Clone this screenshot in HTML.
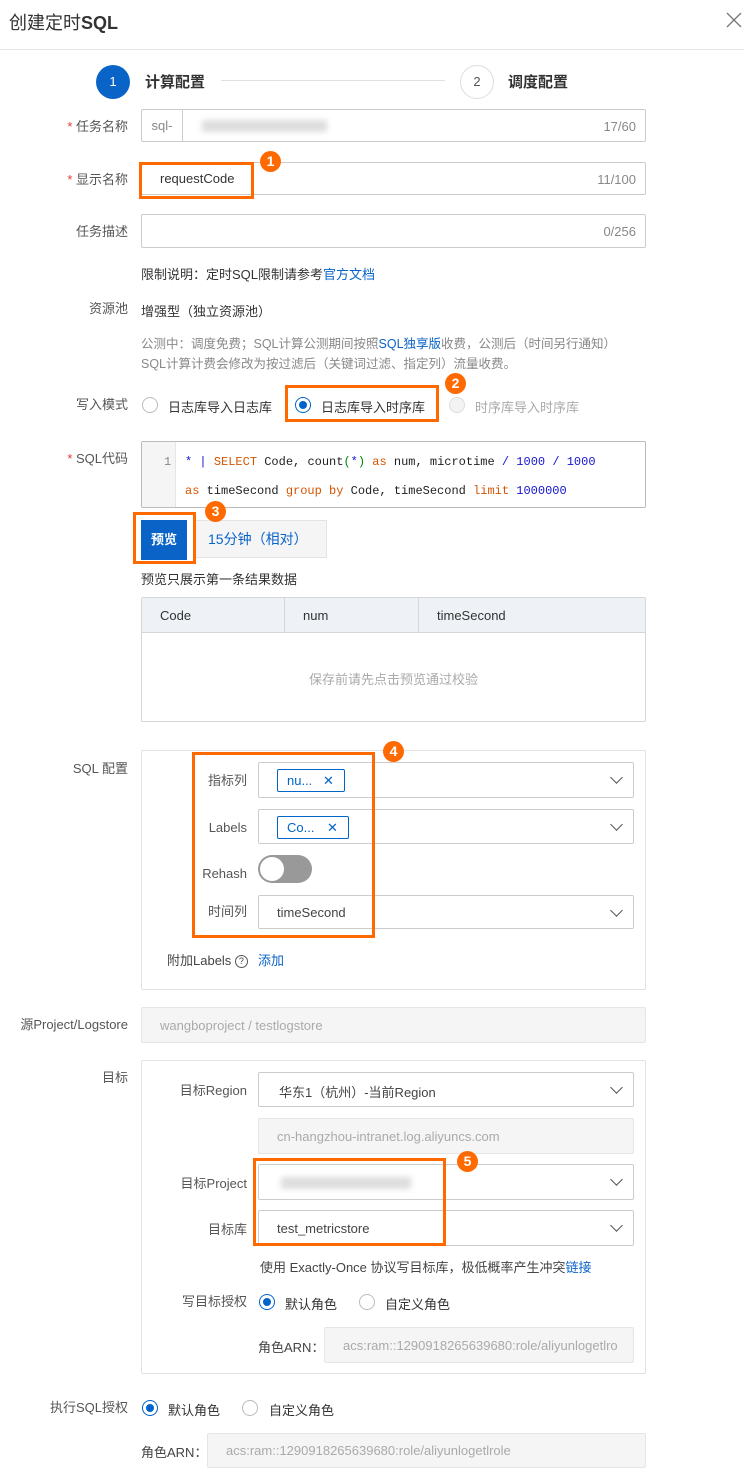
<!DOCTYPE html>
<html><head><meta charset="utf-8"><style>
*{box-sizing:border-box;margin:0;padding:0}
body{width:744px;height:1481px;background:#fff;font-family:"Liberation Sans","Noto Sans CJK SC",sans-serif;font-size:13px;color:#333;position:relative;overflow:hidden}
.a{position:absolute;white-space:nowrap}
.lbl{position:absolute;right:616px;white-space:nowrap;color:#555;font-size:13px;line-height:16px}
.req:before{content:"* ";color:#e53935}
.inp{position:absolute;border:1px solid #ccc;background:#fff;border-radius:2px}
.dis{background:#f5f5f5;border-color:#e5e5e5;color:#aaa}
.cnt{position:absolute;right:9px;top:9px;color:#888;font-size:13px}
.ob{position:absolute;border:3px solid #ff6a00}
.bd{position:absolute;width:21px;height:21px;border-radius:50%;background:#ff6a00;color:#fff;font-size:14px;font-weight:bold;text-align:center;line-height:21px}
.rad{position:absolute;width:16px;height:16px;border-radius:50%;border:1px solid #bbb;background:#fff}
.rad.on{border-color:#0064c8}
.rad.on:after{content:"";position:absolute;left:3px;top:3px;width:8px;height:8px;border-radius:50%;background:#0064c8}
.chev{position:absolute;right:12px;top:10px;width:9px;height:9px;border-right:1.5px solid #555;border-bottom:1.5px solid #555;transform:rotate(45deg)}
.tag{position:absolute;top:6px;height:23px;border:1px solid #0064c8;border-radius:2px;color:#0064c8;font-size:13px;line-height:21px;padding-left:9px}
.mono{font-family:"Liberation Mono","DejaVu Sans Mono",monospace;font-size:12px}
.k{color:#d35400}.n{color:#1515d0}
</style></head><body>
<div class="a" style="left:9px;top:9px;font-size:18px;color:#333">创建定时<b>SQL</b></div>
<svg class="a" style="left:726px;top:12px" width="16" height="16"><path d="M1 1L15 15M15 1L1 15" stroke="#777" stroke-width="1.3"/></svg>
<div class="a" style="left:0;top:49px;width:744px;height:1px;background:#e5e5e5"></div>

<div class="a" style="left:96px;top:65px;width:34px;height:34px;border-radius:50%;background:#0a64c8;color:#fff;text-align:center;line-height:34px;font-size:13px">1</div>
<div class="a" style="left:145px;top:71px;font-size:15px;font-weight:bold;color:#333">计算配置</div>
<div class="a" style="left:221px;top:80px;width:224px;height:1px;background:#e0e0e0"></div>
<div class="a" style="left:460px;top:65px;width:34px;height:34px;border-radius:50%;border:1px solid #ddd;color:#555;text-align:center;line-height:32px;font-size:13px">2</div>
<div class="a" style="left:508px;top:71px;font-size:15px;font-weight:bold;color:#333">调度配置</div>

<div class="lbl req" style="top:119px">任务名称</div>
<div class="inp" style="left:141px;top:109px;width:505px;height:33px">
 <div class="a" style="left:0;top:0;width:41px;height:31px;border-right:1px solid #ccc;color:#888;text-align:center;line-height:31px">sql-</div>
 <div class="a" style="left:60px;top:10px;width:125px;height:12px;background:#ddd;filter:blur(3px)"></div>
 <div class="cnt">17/60</div>
</div>

<div class="lbl req" style="top:172px">显示名称</div>
<div class="inp" style="left:141px;top:162px;width:505px;height:33px">
 <div class="a" style="left:18px;top:8px;color:#333">requestCode</div>
 <div class="cnt">11/100</div>
</div>
<div class="ob" style="left:139px;top:162px;width:115px;height:37px"></div>
<div class="bd" style="left:260px;top:151px">1</div>

<div class="lbl" style="top:224px">任务描述</div>
<div class="inp" style="left:141px;top:214px;width:505px;height:34px"><div class="cnt">0/256</div></div>

<div class="a" style="left:141px;top:264px;color:#333">限制说明：定时SQL限制请参考<span style="color:#0a64c8">官方文档</span></div>
<div class="lbl" style="top:301px">资源池</div>
<div class="a" style="left:141px;top:301px">增强型（独立资源池）</div>
<div class="a" style="left:141px;top:333px;color:#888;font-size:12.5px">公测中：调度免费；SQL计算公测期间按照<span style="color:#0a64c8">SQL独享版</span>收费，公测后（时间另行通知）</div>
<div class="a" style="left:141px;top:353px;color:#888;font-size:12.5px">SQL计算计费会修改为按过滤后（关键词过滤、指定列）流量收费。</div>

<div class="lbl" style="top:397px">写入模式</div>
<div class="rad" style="left:142px;top:397px"></div>
<div class="a" style="left:168px;top:397px">日志库导入日志库</div>
<div class="rad on" style="left:295px;top:397px"></div>
<div class="a" style="left:321px;top:397px">日志库导入时序库</div>
<div class="rad" style="left:449px;top:397px;background:#f3f3f3;border-color:#ddd"></div>
<div class="a" style="left:475px;top:397px;color:#aaa">时序库导入时序库</div>
<div class="ob" style="left:285px;top:385px;width:154px;height:37px"></div>
<div class="bd" style="left:445px;top:373px">2</div>

<div class="lbl req" style="top:451px">SQL代码</div>
<div class="inp" style="left:141px;top:441px;width:505px;height:67px;border-color:#bbb">
 <div class="a" style="left:0;top:0;width:34px;height:65px;background:#f5f5f5;border-right:1px solid #e5e5e5"></div>
 <div class="a mono" style="left:22px;top:13px;color:#888">1</div>
 <div class="a mono" style="left:43px;top:13px;color:#222"><span class="n">*</span> <span class="n">|</span> <span class="k">SELECT</span> Code, count<span style="color:#080">(</span><span class="n">*</span><span style="color:#080">)</span> <span class="k">as</span> num, microtime <span class="n">/</span> <span class="n">1000</span> <span class="n">/</span> <span class="n">1000</span></div>
 <div class="a mono" style="left:43px;top:42px;color:#222"><span class="k">as</span> timeSecond <span class="k">group by</span> Code, timeSecond <span class="k">limit</span> <span class="n">1000000</span></div>
</div>

<div class="a" style="left:141px;top:520px;width:46px;height:40px;background:#0a64c8;color:#fff;text-align:center;line-height:40px;font-weight:bold">预览</div>
<div class="a" style="left:195px;top:520px;width:132px;height:38px;background:#f5f5f5;border:1px solid #e3e3e3;color:#0a64c8;font-size:14px;line-height:36px;padding-left:12px">15分钟（相对）</div>
<div class="ob" style="left:133px;top:512px;width:63px;height:52px"></div>
<div class="bd" style="left:205px;top:501px">3</div>

<div class="a" style="left:141px;top:569px">预览只展示第一条结果数据</div>
<div class="inp" style="left:141px;top:597px;width:505px;height:125px;border-color:#d6d6d6">
 <div class="a" style="left:0;top:0;width:503px;height:35px;background:#eef1f6;border-bottom:1px solid #d6d6d6"></div>
 <div class="a" style="left:142px;top:0;width:1px;height:35px;background:#d6d6d6"></div>
 <div class="a" style="left:276px;top:0;width:1px;height:35px;background:#d6d6d6"></div>
 <div class="a" style="left:18px;top:10px">Code</div>
 <div class="a" style="left:161px;top:10px">num</div>
 <div class="a" style="left:295px;top:10px">timeSecond</div>
 <div class="a" style="left:0;top:71px;width:503px;text-align:center;color:#aaa">保存前请先点击预览通过校验</div>
</div>

<div class="lbl" style="top:761px">SQL 配置</div>
<div class="inp" style="left:141px;top:750px;width:505px;height:240px;border-color:#e3e3e3">
</div>
<div class="lbl" style="top:773px;right:497px">指标列</div>
<div class="inp" style="left:258px;top:762px;width:376px;height:36px"><div class="tag" style="left:18px;width:68px">nu...<span style="position:absolute;left:45px">✕</span></div><div class="chev"></div></div>
<div class="lbl" style="top:820px;right:497px">Labels</div>
<div class="inp" style="left:258px;top:809px;width:376px;height:35px"><div class="tag" style="left:18px;width:72px">Co...<span style="position:absolute;left:49px">✕</span></div><div class="chev"></div></div>
<div class="lbl" style="top:866px;right:497px">Rehash</div>
<div class="a" style="left:258px;top:855px;width:54px;height:28px;border-radius:14px;background:#999"><div class="a" style="left:2px;top:2px;width:24px;height:24px;border-radius:50%;background:#fff"></div></div>
<div class="lbl" style="top:904px;right:497px">时间列</div>
<div class="inp" style="left:258px;top:895px;width:376px;height:34px"><div class="a" style="left:18px;top:9px;color:#444">timeSecond</div><div class="chev"></div></div>
<div class="ob" style="left:192px;top:752px;width:183px;height:186px"></div>
<div class="bd" style="left:383px;top:741px">4</div>
<div class="a" style="left:167px;top:950px;color:#444">附加Labels <span style="display:inline-block;width:13px;height:13px;border:1px solid #555;border-radius:50%;font-size:9px;text-align:center;line-height:11px;vertical-align:1px">?</span></div>
<div class="a" style="left:258px;top:950px;color:#0a64c8">添加</div>

<div class="lbl" style="top:1017px;color:#555">源Project/Logstore</div>
<div class="inp dis" style="left:141px;top:1007px;width:505px;height:36px"><div class="a" style="left:18px;top:10px">wangboproject / testlogstore</div></div>

<div class="lbl" style="top:1070px">目标</div>
<div class="inp" style="left:141px;top:1060px;width:505px;height:314px;border-color:#e3e3e3"></div>
<div class="lbl" style="top:1083px;right:497px">目标Region</div>
<div class="inp" style="left:258px;top:1072px;width:376px;height:35px"><div class="a" style="left:20px;top:9px;color:#444">华东1（杭州）-当前Region</div><div class="chev"></div></div>
<div class="inp dis" style="left:258px;top:1118px;width:376px;height:36px"><div class="a" style="left:18px;top:10px">cn-hangzhou-intranet.log.aliyuncs.com</div></div>
<div class="lbl" style="top:1176px;right:497px">目标Project</div>
<div class="inp" style="left:258px;top:1164px;width:376px;height:36px"><div class="a" style="left:22px;top:12px;width:130px;height:12px;background:#ddd;filter:blur(3px)"></div><div class="chev"></div></div>
<div class="lbl" style="top:1222px;right:497px">目标库</div>
<div class="inp" style="left:258px;top:1210px;width:376px;height:36px"><div class="a" style="left:18px;top:10px;color:#444">test_metricstore</div><div class="chev"></div></div>
<div class="ob" style="left:253px;top:1158px;width:193px;height:88px"></div>
<div class="bd" style="left:457px;top:1151px">5</div>
<div class="a" style="left:260px;top:1257px;color:#444">使用 Exactly-Once 协议写目标库，极低概率产生冲突<span style="color:#0a64c8">链接</span></div>
<div class="lbl" style="top:1294px;right:497px">写目标授权</div>
<div class="rad on" style="left:259px;top:1294px"></div>
<div class="a" style="left:285px;top:1294px">默认角色</div>
<div class="rad" style="left:359px;top:1294px"></div>
<div class="a" style="left:385px;top:1294px">自定义角色</div>
<div class="a" style="left:258px;top:1337px;color:#444">角色ARN：</div>
<div class="inp dis" style="left:324px;top:1327px;width:310px;height:36px"><div class="a" style="left:18px;top:10px">acs:ram::1290918265639680:role/aliyunlogetlro</div></div>

<div class="lbl" style="top:1400px">执行SQL授权</div>
<div class="rad on" style="left:142px;top:1400px"></div>
<div class="a" style="left:168px;top:1400px">默认角色</div>
<div class="rad" style="left:242px;top:1400px"></div>
<div class="a" style="left:269px;top:1400px">自定义角色</div>
<div class="a" style="left:141px;top:1442px;color:#444">角色ARN：</div>
<div class="inp dis" style="left:207px;top:1433px;width:439px;height:35px"><div class="a" style="left:18px;top:9px">acs:ram::1290918265639680:role/aliyunlogetlrole</div></div>
</body></html>
